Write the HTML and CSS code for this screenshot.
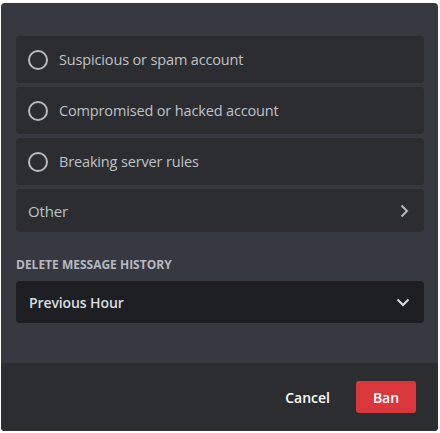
FILE: index.html
```html
<!DOCTYPE html>
<html>
<head>
<meta charset="utf-8">
<link rel="stylesheet" href="styles.css">
</head>
<body>
<div class="modal">
  <div class="content">
    <div class="options">
      <div class="option">
        <span class="radio"></span>
        <span class="label">Suspicious or spam account</span>
      </div>
      <div class="option">
        <span class="radio"></span>
        <span class="label">Compromised or hacked account</span>
      </div>
      <div class="option">
        <span class="radio"></span>
        <span class="label">Breaking server rules</span>
      </div>
      <div class="option other">
        <span class="label">Other</span>
        <svg class="chev" width="16" height="16" viewBox="0 0 16 16"><path d="M5.5 2.5 L11 8 L5.5 13.5" fill="none" stroke="#b5bac1" stroke-width="2"/></svg>
      </div>
    </div>
    <div class="section-title">Delete Message History</div>
    <div class="select">
      <span class="value">Previous Hour</span>
      <svg class="chev" width="16" height="16" viewBox="0 0 16 16"><path d="M2.5 5.5 L8 11 L13.5 5.5" fill="none" stroke="#dbdee1" stroke-width="2"/></svg>
    </div>
  </div>
  <div class="footer">
    <button class="btn cancel">Cancel</button>
    <button class="btn ban">Ban</button>
  </div>
</div>
</body>
</html>
```
FILE: styles.css
```css
html, body {
  margin: 0;
  padding: 0;
  background: #ffffff;
}
body {
  font-family: "Open Sans", "Noto Sans", sans-serif;
}
.modal {
  margin: 3px 2px 0 1px;
  width: 437px;
  height: 428px;
  background: #363940;
  border-radius: 4px;
  overflow: hidden;
  display: flex;
  flex-direction: column;
}
.content {
  flex: 1;
  padding: 33px 14px 0 15px;
}
.options {
  display: flex;
  flex-direction: column;
  gap: 4px;
}
.option {
  height: 47px;
  background: #2b2d31;
  border-radius: 4px;
  display: flex;
  align-items: center;
  padding: 0 12px;
  gap: 11px;
  color: #bfc3c9;
  font-size: 14.5px;
  letter-spacing: -0.15px;
}
.option.other {
  height: 43px;
  justify-content: space-between;
  padding: 0 12px 0 12px;
  font-size: 15px;
}
.radio {
  width: 16px;
  height: 16px;
  border: 2px solid #b5bac1;
  border-radius: 50%;
  flex: none;
}
.section-title {
  margin-top: 25px;
  font-size: 12px;
  font-weight: 700;
  text-transform: uppercase;
  color: #b5bac1;
  line-height: 16px;
  letter-spacing: 0;
}
.select {
  margin-top: 8px;
  height: 42px;
  background: #1e1f22;
  border-radius: 4px;
  display: flex;
  align-items: center;
  justify-content: space-between;
  padding: 0 13px 0 13px;
  color: #dbdee1;
  font-size: 14px;
  font-weight: 600;
  letter-spacing: -0.1px;
}
.footer {
  height: 68px;
  background: #2b2d31;
  display: flex;
  align-items: center;
  justify-content: flex-end;
  padding: 0 22px 0 16px;
  gap: 12px;
}
.btn {
  font-family: inherit;
  font-size: 14px;
  font-weight: 600;
  border: none;
  border-radius: 3px;
  height: 32px;
  cursor: pointer;
}
.cancel {
  background: transparent;
  color: #ffffff;
  padding: 0 14px;
}
.ban {
  background: #da373c;
  color: #ffffff;
  width: 60px;
}
```
